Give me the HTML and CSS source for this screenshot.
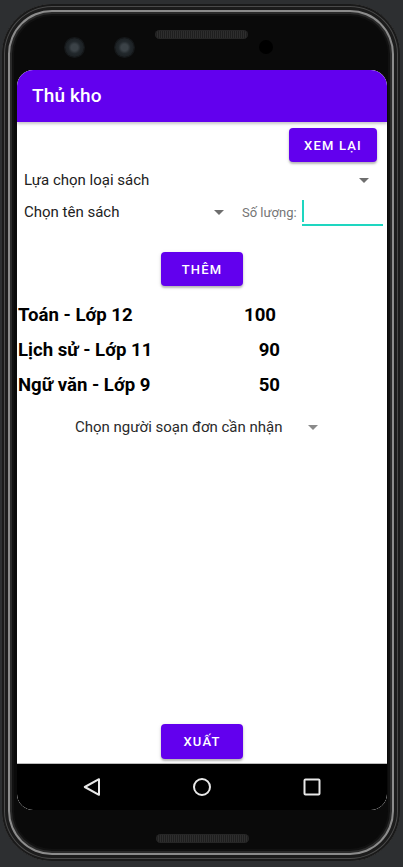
FILE: index.html
```html
<!DOCTYPE html>
<html lang="vi">
<head>
<meta charset="utf-8">
<title>Thủ kho</title>
<link rel="stylesheet" href="styles.css">
</head>
<body>
<div class="phone">
  <div class="bezel-top">
    <span class="cam cam-1"></span>
    <span class="cam cam-2"></span>
    <span class="speaker speaker-top"></span>
    <span class="sensor"></span>
  </div>
  <div class="screen">
    <header class="appbar"><h1 class="title">Thủ kho</h1></header>
    <main class="content">
      <button class="btn btn-review">XEM LẠI</button>
      <div class="spinner spinner-type"><span class="spinner-text">Lựa chọn loại sách</span><span class="caret"></span></div>
      <div class="form-row">
        <div class="spinner spinner-book"><span class="spinner-text">Chọn tên sách</span><span class="caret"></span></div>
        <span class="qty-label">Số lượng:</span>
        <div class="qty-input"><span class="cursor"></span></div>
      </div>
      <button class="btn btn-add">THÊM</button>
      <ul class="list">
        <li class="item"><span class="name">Toán - Lớp 12</span><span class="qty qty-wide">100</span></li>
        <li class="item"><span class="name">Lịch sử - Lớp 11</span><span class="qty">90</span></li>
        <li class="item"><span class="name">Ngữ văn - Lớp 9</span><span class="qty">50</span></li>
      </ul>
      <div class="spinner spinner-person"><span class="spinner-text small">Chọn người soạn đơn cần nhận</span><span class="caret caret-light"></span></div>
      <div class="spacer"></div>
      <button class="btn btn-export">XUẤT</button>
    </main>
    <nav class="navbar">
      <svg class="nav-icon" width="20" height="20" viewBox="0 0 20 20"><path d="M17 2.2 L2.8 10 L17 17.8 Z" fill="none" stroke="#e8e8e8" stroke-width="2" stroke-linejoin="round"/></svg>
      <svg class="nav-icon" width="20" height="20" viewBox="0 0 20 20"><circle cx="10" cy="10" r="8" fill="none" stroke="#e8e8e8" stroke-width="2"/></svg>
      <svg class="nav-icon" width="20" height="20" viewBox="0 0 20 20"><rect x="2.5" y="2.5" width="15" height="15" rx="1" fill="none" stroke="#e8e8e8" stroke-width="2"/></svg>
    </nav>
  </div>
  <div class="bezel-bottom"><span class="speaker"></span></div>
</div>
</body>
</html>
```

FILE: styles.css
```css
* { box-sizing: border-box; }

html, body {
  margin: 0;
  padding: 0;
  background: #2d2f31;
  font-family: Roboto, "Noto Sans", "Liberation Sans", sans-serif;
}

body {
  width: 403px;
  height: 867px;
  overflow: hidden;
}

.phone {
  margin: 4px 0 0 2px;
  width: 398px;
  height: 857px;
  padding: 0 13px 0 15px;
  border-radius: 50px;
  background: #0a0a0a;
  box-shadow:
    inset 0 0 0 2px #1a1a1a,
    inset 0 0 0 3px #4a4a4a,
    inset 0 0 0 6px #1c1c1c,
    inset 0 0 0 8px #8c8c8c,
    inset 0 0 0 10px #2a2a2a,
    inset 0 0 0 12px #111;
  display: flex;
  flex-direction: column;
}

.bezel-top {
  height: 66px;
  display: flex;
  align-items: flex-start;
}

.cam {
  width: 19px;
  height: 19px;
  margin-top: 34px;
  border-radius: 50%;
  background: radial-gradient(circle at 50% 50%, #3b4247 0 25%, #22282c 45%, #1a1e21 75%, #262b2e 100%);
  box-shadow: 0 0 0 1px #15181a;
}
.cam-1 { margin-left: 48px; }
.cam-2 { margin-left: 31px; }

.speaker {
  width: 93px;
  height: 9px;
  border-radius: 5px;
  background:
    repeating-linear-gradient(90deg, #2e2e2e 0 1px, #1f1f1f 1px 2px),
    #222;
  box-shadow: inset 0 0 0 1px #262626;
}
.speaker-top {
  margin-top: 26px;
  margin-left: 21px;
}

.sensor {
  width: 14px;
  height: 14px;
  margin-top: 36px;
  margin-left: 11px;
  border-radius: 50%;
  background: #000;
}

.screen {
  width: 370px;
  height: 740px;
  display: flex;
  flex-direction: column;
  background: #fff;
  border-radius: 16px;
  overflow: hidden;
}

.appbar {
  height: 52px;
  flex: none;
  background: #6200ee;
  display: flex;
  align-items: center;
  padding-left: 15px;
  border-radius: 16px 16px 0 0;
  box-shadow: 0 2px 3px rgba(0, 0, 0, 0.22);
  position: relative;
  z-index: 1;
}

.title {
  margin: 0;
  color: #fff;
  font-size: 19px;
  font-weight: 500;
  line-height: 24px;
  letter-spacing: 0.15px;
}

.content {
  flex: 1;
  display: flex;
  flex-direction: column;
  padding-top: 6px;
  background: #fff;
  border-bottom: 1px solid #bdbdbd;
}

.btn {
  border: none;
  border-radius: 4px;
  background: #6200ee;
  color: #fff;
  font-family: Roboto, "Noto Sans", sans-serif;
  font-size: 13px;
  font-weight: 500;
  letter-spacing: 1.2px;
  padding: 0;
  box-shadow: 0 2px 2px rgba(0, 0, 0, 0.22), 0 1px 4px rgba(0, 0, 0, 0.12);
  flex: none;
}

.btn-review {
  align-self: flex-end;
  margin-right: 10px;
  width: 88px;
  height: 34px;
}

.btn-add {
  align-self: center;
  margin-top: 25px;
  width: 82px;
  height: 34px;
}

.btn-export {
  align-self: center;
  width: 82px;
  height: 35px;
  margin-bottom: 4px;
}

.spinner {
  display: flex;
  align-items: center;
  height: 30px;
  flex: none;
}

.spinner-text {
  font-size: 15px;
  color: #212121;
  line-height: 20px;
}

.spinner-text.small {
  color: #2a2a2a;
}

.caret {
  width: 0;
  height: 0;
  border-left: 5px solid transparent;
  border-right: 5px solid transparent;
  border-top: 5px solid #6e6e6e;
}

.caret-light { border-top-color: #8a8a8a; }

.spinner-type {
  margin-top: 3px;
  padding: 0 18px 0 7px;
  justify-content: space-between;
}

.form-row {
  margin-top: 2px;
  height: 30px;
  display: flex;
  align-items: center;
  flex: none;
}

.spinner-book {
  width: 215px;
  padding: 0 8px 0 7px;
  justify-content: space-between;
}

.qty-label {
  margin-left: 10px;
  width: 60px;
  font-size: 13px;
  color: #757575;
  white-space: nowrap;
}

.qty-input {
  align-self: flex-start;
  width: 81px;
  height: 29px;
  border-bottom: 2px solid #1ed6c0;
  padding-top: 3px;
}

.cursor {
  display: block;
  width: 2px;
  height: 22px;
  background: #1ed6c0;
}

.list {
  list-style: none;
  margin: 11px 0 0 0;
  padding: 0 0 0 1px;
  flex: none;
}

.item {
  height: 35px;
  display: flex;
  align-items: center;
  font-size: 18.6px;
  font-weight: 700;
  color: #000;
}

.name { width: 226px; }

.qty {
  width: 36px;
  text-align: right;
}

.qty-wide { width: 32px; }

.spinner-person {
  margin-top: 10px;
  padding-left: 58px;
}

.spinner-person .caret { margin-left: 25px; }

.spacer { flex: 1; }

.navbar {
  height: 46px;
  flex: none;
  background: #000;
  display: flex;
  align-items: center;
  justify-content: center;
  gap: 90px;
  border-radius: 0 0 16px 16px;
}

.nav-icon { display: block; }

.bezel-bottom {
  height: 51px;
  display: flex;
  justify-content: center;
  align-items: flex-start;
}

.bezel-bottom .speaker { margin-top: 24px; }
```
